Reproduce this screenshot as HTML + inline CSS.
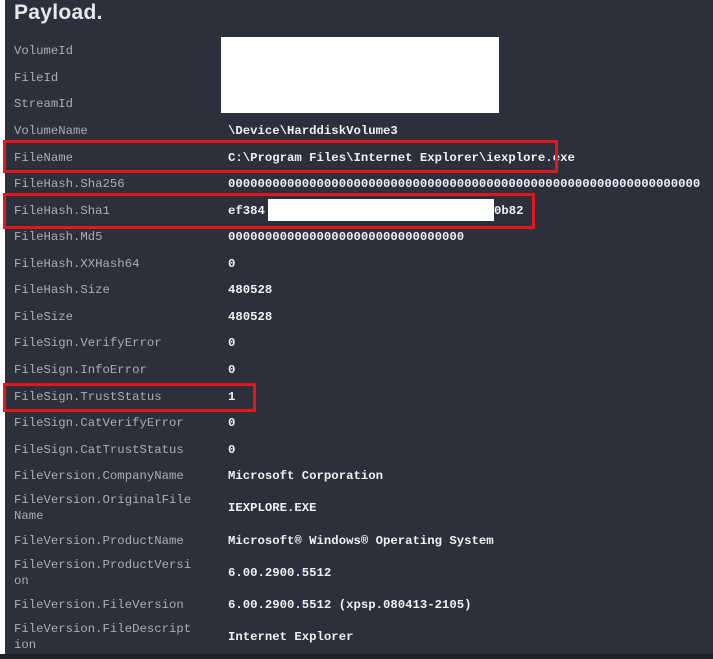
<!DOCTYPE html><html><head><style>
body{margin:0;width:713px;height:659px;background:#fff;position:relative;overflow:hidden}
#p{position:absolute;left:5px;top:0;width:708px;height:654px;background:#2c303c}
#b{position:absolute;left:0;top:654px;width:713px;height:5px;background:#1f222b}
.t{position:absolute;left:14px;top:1px;font:bold 21px "Liberation Sans",sans-serif;color:#e6e8ec;letter-spacing:0.3px}
.r{position:absolute;font:12.3px/16px "Liberation Mono",monospace;white-space:pre;margin-top:1px}
.k{left:14px;color:#a9adb6}
.v{left:228px;color:#eef0f3;font-weight:bold}
.w{position:absolute;background:#fff}
.x{position:absolute;border:3px solid #e3161b;box-sizing:border-box}
</style></head><body><div id="p"></div><div id="b"></div>
<div class="t">Payload.</div>
<div class="r k" style="top:42px">VolumeId</div>
<div class="r k" style="top:69px">FileId</div>
<div class="r k" style="top:95px">StreamId</div>
<div class="r k" style="top:122px">VolumeName</div><div class="r v" style="top:122px">\Device\HarddiskVolume3</div>
<div class="r k" style="top:149px">FileName</div><div class="r v" style="top:149px">C:\Program Files\Internet Explorer\iexplore.exe</div>
<div class="r k" style="top:175px">FileHash.Sha256</div><div class="r v" style="top:175px">0000000000000000000000000000000000000000000000000000000000000000</div>
<div class="r k" style="top:202px">FileHash.Sha1</div><div class="r v" style="top:202px">ef384</div><div class="r v" style="top:202px;left:494px">0b82</div>
<div class="r k" style="top:228px">FileHash.Md5</div><div class="r v" style="top:228px">00000000000000000000000000000000</div>
<div class="r k" style="top:255px">FileHash.XXHash64</div><div class="r v" style="top:255px">0</div>
<div class="r k" style="top:281px">FileHash.Size</div><div class="r v" style="top:281px">480528</div>
<div class="r k" style="top:308px">FileSize</div><div class="r v" style="top:308px">480528</div>
<div class="r k" style="top:334px">FileSign.VerifyError</div><div class="r v" style="top:334px">0</div>
<div class="r k" style="top:361px">FileSign.InfoError</div><div class="r v" style="top:361px">0</div>
<div class="r k" style="top:388px">FileSign.TrustStatus</div><div class="r v" style="top:388px">1</div>
<div class="r k" style="top:414px">FileSign.CatVerifyError</div><div class="r v" style="top:414px">0</div>
<div class="r k" style="top:441px">FileSign.CatTrustStatus</div><div class="r v" style="top:441px">0</div>
<div class="r k" style="top:467px">FileVersion.CompanyName</div><div class="r v" style="top:467px">Microsoft Corporation</div>
<div class="r k" style="top:491px">FileVersion.OriginalFile
Name</div><div class="r v" style="top:499px">IEXPLORE.EXE</div>
<div class="r k" style="top:532px">FileVersion.ProductName</div><div class="r v" style="top:532px">Microsoft® Windows® Operating System</div>
<div class="r k" style="top:556px">FileVersion.ProductVersi
on</div><div class="r v" style="top:564px">6.00.2900.5512</div>
<div class="r k" style="top:596px">FileVersion.FileVersion</div><div class="r v" style="top:596px">6.00.2900.5512 (xpsp.080413-2105)</div>
<div class="r k" style="top:620px">FileVersion.FileDescript
ion</div><div class="r v" style="top:628px">Internet Explorer</div>
<div class="w" style="left:221px;top:37px;width:278px;height:76px"></div>
<div class="w" style="left:268px;top:199px;width:226px;height:22px"></div>
<div class="x" style="left:3px;top:140px;width:555px;height:33px"></div>
<div class="x" style="left:3px;top:193px;width:532px;height:36px"></div>
<div class="x" style="left:3px;top:383px;width:253px;height:29px"></div>
</body></html>
